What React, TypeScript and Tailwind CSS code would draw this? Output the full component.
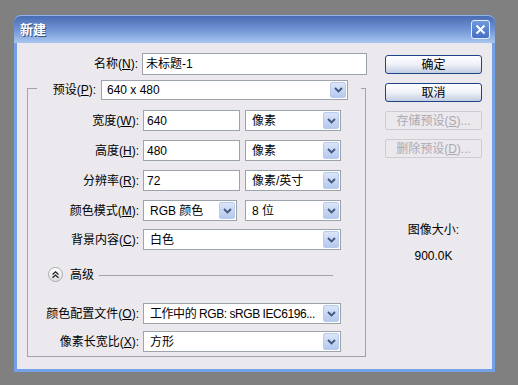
import React from "react";

function Chevron() {
  return (
    <svg width="9" height="6" viewBox="0 0 9 6">
      <path d="M1 1 L4.5 4.5 L8 1" fill="none" stroke="#42577d" strokeWidth="1.9" />
    </svg>
  );
}

function DropBtn() {
  return (
    <div className="w-[16px] flex items-center justify-center bg-linear-to-b from-[#dbe5f8] to-[#b4c9ee] border border-[#b9cbec] rounded-[2px]">
      <Chevron />
    </div>
  );
}

function Select({ text, cls, tcls = "" }: { text: string; cls: string; tcls?: string }) {
  return (
    <div className={"flex bg-white border border-[#9da3ab] " + cls}>
      <div className={"flex-1 flex items-center pl-[6px] whitespace-nowrap overflow-hidden " + tcls}>{text}</div>
      <div className="flex p-[1px]">
        <DropBtn />
      </div>
    </div>
  );
}

function Input({ text, cls }: { text: string; cls: string }) {
  return (
    <div className={"flex items-center bg-white border border-[#9da3ab] pl-[3px] " + cls}>{text}</div>
  );
}

function Lbl({ zh, k }: { zh: string; k: string }) {
  return (
    <div className="w-[112px] text-right whitespace-nowrap pr-[1px]">
      {zh}(<span className="underline">{k}</span>):
    </div>
  );
}

function PushBtn({ children }: { children: React.ReactNode }) {
  return (
    <div className="h-[19px] flex items-center justify-center border border-[#1d4487] rounded-[3px] bg-linear-to-b from-[#ffffff] via-[#eef1f8] to-[#c3cde2]">
      {children}
    </div>
  );
}

function DisBtn({ children }: { children: React.ReactNode }) {
  return (
    <div className="h-[19px] flex items-center justify-center border border-[#cfcdd3] rounded-[2px] text-[#aca8b0]">
      {children}
    </div>
  );
}

export default function App() {
  return (
    <div className="w-[518px] h-[385px] bg-[#808080] pt-[15px] pl-[14px] overflow-hidden font-['Liberation_Sans','Noto_Sans_CJK_SC',sans-serif] text-[12px] text-black">
      <div className="w-[481px] h-[357px] flex flex-col rounded-t-[7px] bg-[#73a1e8]">
        {/* title bar */}
        <div className="h-[28px] flex items-center justify-between pl-[6px] pr-[5px] rounded-t-[7px] border-t border-[#8fb2ec] bg-linear-to-b from-[#4a6cb4] via-[#7094d3] to-[#a9c6f0]">
          <div className="text-white font-bold text-[13px] [text-shadow:1px_1px_0_#35527f]">新建</div>
          <div className="w-[19px] h-[19px] flex items-center justify-center rounded-[3px] border border-[#e6eefc] bg-linear-to-b from-[#6f97dc] to-[#4670c4]">
            <svg width="11" height="11" viewBox="0 0 11 11">
              <path d="M1.5 1.5 L9.5 9.5 M9.5 1.5 L1.5 9.5" stroke="white" strokeWidth="2" />
            </svg>
          </div>
        </div>
        {/* client */}
        <div className="flex-1 mx-[3px] mb-[3px] bg-[#ebe9ed] flex pl-[10px]">
          {/* left column */}
          <div className="w-[341px] flex flex-col pt-[10px]">
            <div className="flex items-center">
              <Lbl zh="名称" k="N" />
              <Input text="未标题-1" cls="ml-[3px] w-[225px] h-[22px]" />
            </div>
            <fieldset className="mt-[5px] w-[339px] border border-[#a3a3a6] p-0 m-0 min-w-0 flex flex-col">
              <legend className="ml-[9px] pr-[13px] h-[16px] flex items-start">
                <div className="w-[59px] h-[20px] flex items-center justify-end whitespace-nowrap">
                  预设(<span className="underline">P</span>):
                </div>
                <Select text="640 x 480" cls="ml-[5px] w-[247px] h-[20px]" tcls="!pl-[5px]" />
              </legend>
              <div className="flex items-center mt-[14px]">
                <Lbl zh="宽度" k="W" />
                <Input text="640" cls="ml-[3px] w-[97px] h-[21px]" />
                <Select text="像素" cls="ml-[5px] w-[96px] h-[21px]" />
              </div>
              <div className="flex items-center mt-[9px]">
                <Lbl zh="高度" k="H" />
                <Input text="480" cls="ml-[3px] w-[97px] h-[21px]" />
                <Select text="像素" cls="ml-[5px] w-[96px] h-[21px]" />
              </div>
              <div className="flex items-center mt-[9px]">
                <Lbl zh="分辨率" k="R" />
                <Input text="72" cls="ml-[3px] w-[97px] h-[21px]" />
                <Select text="像素/英寸" cls="ml-[5px] w-[96px] h-[21px]" />
              </div>
              <div className="flex items-center mt-[9px]">
                <Lbl zh="颜色模式" k="M" />
                <Select text="RGB 颜色" cls="ml-[3px] w-[94px] h-[21px]" />
                <Select text="8 位" cls="ml-[8px] w-[96px] h-[21px]" />
              </div>
              <div className="flex items-center mt-[8px]">
                <Lbl zh="背景内容" k="C" />
                <Select text="白色" cls="ml-[3px] w-[198px] h-[21px]" />
              </div>
              <div className="flex items-center mt-[17px] h-[15px]">
                <div className="ml-[20px] w-[15px] h-[15px] rounded-full border border-[#a7abb3] bg-linear-to-b from-[#ffffff] to-[#dcdce2] flex items-center justify-center">
                  <svg width="9" height="9" viewBox="0 0 9 9">
                    <path d="M1.5 4.5 L4.5 1.8 L7.5 4.5 M1.5 7.7 L4.5 5 L7.5 7.7" fill="none" stroke="#222" strokeWidth="1.3" />
                  </svg>
                </div>
                <div className="ml-[7px]">高级</div>
                <div className="flex-1 h-px bg-[#a3a3a6] ml-[5px] mr-[32px] mt-[2px]" />
              </div>
              <div className="flex items-center mt-[21px]">
                <Lbl zh="颜色配置文件" k="O" />
                <Select
                  text="工作中的 RGB: sRGB IEC6196..."
                  cls="ml-[3px] w-[198px] h-[21px]"
                  tcls="tracking-[-0.45px]"
                />
              </div>
              <div className="flex items-center mt-[7px] mb-[4px]">
                <Lbl zh="像素长宽比" k="X" />
                <Select text="方形" cls="ml-[3px] w-[198px] h-[21px]" />
              </div>
            </fieldset>
          </div>
          {/* right column */}
          <div className="ml-[17px] w-[97px] flex flex-col pt-[12px]">
            <div className="flex flex-col gap-[9px]">
              <PushBtn>确定</PushBtn>
              <PushBtn>取消</PushBtn>
              <DisBtn>
                存储预设(<span className="underline">S</span>)...
              </DisBtn>
              <DisBtn>
                删除预设(<span className="underline">D</span>)...
              </DisBtn>
            </div>
            <div className="mt-[64px] text-center leading-[16px]">图像大小:</div>
            <div className="mt-[10px] text-center leading-[16px]">900.0K</div>
          </div>
        </div>
      </div>
    </div>
  );
}
